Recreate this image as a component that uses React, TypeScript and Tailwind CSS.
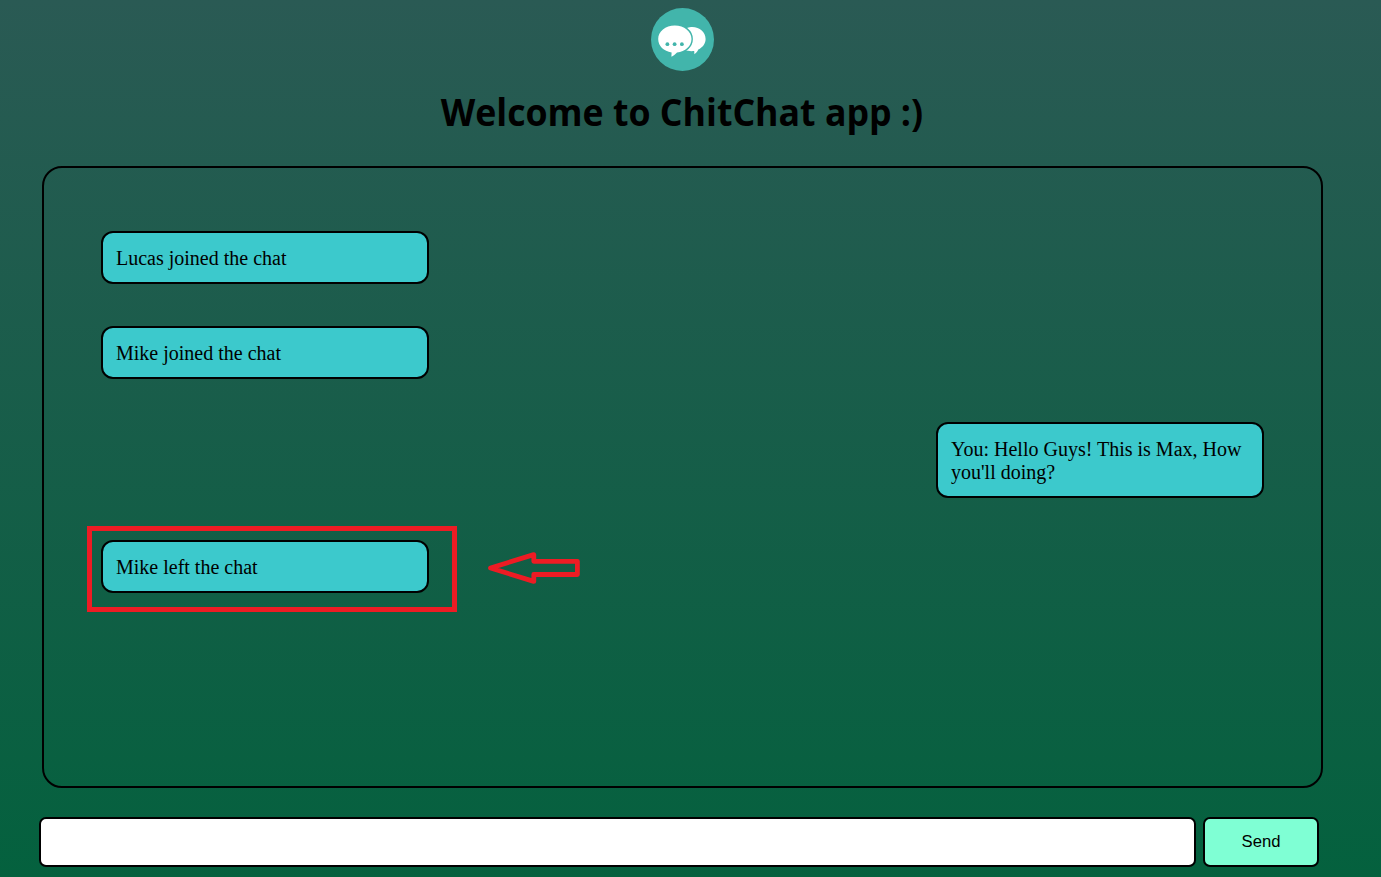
const messages = [
  { text: "Lucas joined the chat", side: "left", marked: false },
  { text: "Mike joined the chat", side: "left", marked: false },
  { text: "You: Hello Guys! This is Max, How you'll doing?", side: "right", marked: false },
  { text: "Mike left the chat", side: "left", marked: true },
];

function Logo() {
  return (
    <svg className="h-[63px] w-[63px]" viewBox="0 0 63 63" aria-hidden="true">
      <circle cx="31.5" cy="31.5" r="31.5" fill="#42b5ab" />
      <path
        d="M36 20C37.8 19.2 39.8 19 41.2 19C48.8 19 54.6 24.4 54.6 31C54.6 35.6 51.8 39.4 47.3 41.5C46.4 43.5 45 45.2 43.4 46.2L43.2 43C40 43.4 36.5 43 33.8 42Z"
        fill="#fff"
      />
      <path
        d="M23.8 17.4C33.2 17.4 40.5 23.4 40.5 31C40.5 38.2 34.2 43.6 26 44.6C24.4 46.4 22.3 47.9 20.4 48.7L20.6 44.5C12.8 43.2 7.2 38.2 7.2 31C7.2 23.4 14.4 17.4 23.8 17.4Z"
        fill="#fff"
        stroke="#42b5ab"
        strokeWidth="2.8"
        paintOrder="stroke"
      />
      <g fill="#42b5ab">
        <circle cx="16.4" cy="36.2" r="1.9" />
        <circle cx="23.6" cy="36.2" r="1.9" />
        <circle cx="30.9" cy="36.2" r="1.9" />
      </g>
    </svg>
  );
}

function Marker() {
  return (
    <>
      <div className="pointer-events-none absolute -top-[16px] -left-[16px] h-[86px] w-[370px] border-[5px] border-[#ed1c24]" />
      <svg
        className="pointer-events-none absolute top-[8px] left-[384px] h-[36px] w-[95px]"
        viewBox="0 0 95 36"
        fill="none"
        stroke="#ed1c24"
        strokeWidth="4.8"
        strokeLinejoin="round"
        aria-hidden="true"
      >
        <path d="M3.5 18L46.8 4.6V11.3H90.4V24.5H46.8V31.4Z" />
      </svg>
    </>
  );
}

export default function App() {
  return (
    <div className="flex h-[877px] w-full flex-col overflow-hidden bg-[linear-gradient(to_bottom,#2a5a54,#04613e)] pt-2 pr-4 text-black">
      <header className="flex flex-col items-center">
        <Logo />
        <h1 className="mt-[14px] mr-px mb-[2px] scale-x-[0.939] font-['Open_Sans',sans-serif] text-[38px] leading-[52px] font-bold whitespace-nowrap">
          Welcome to ChitChat app :)
        </h1>
      </header>
      <main className="mt-[27px] ml-[42px] flex h-[622px] w-[1281px] shrink-0 flex-col gap-[42.4px] rounded-[20px] border-2 border-black px-[57px] pt-[63px] font-['Liberation_Serif',serif] text-[20px] leading-[23px]">
        {messages.map((m) => (
          <div
            key={m.text}
            className={`relative w-[328px] rounded-[12px] border-2 border-black bg-[#3cc9cc] px-[13px] pt-[14px] pb-[12px] ${
              m.side === "right" ? "self-end" : "self-start"
            }`}
          >
            {m.text}
            {m.marked && <Marker />}
          </div>
        ))}
      </main>
      <form className="mt-[29px] ml-[39px] flex gap-[7px]" onSubmit={(e) => e.preventDefault()}>
        <input
          type="text"
          aria-label="Message"
          className="h-[50px] w-[1157px] rounded-[7px] border-2 border-black bg-white px-3 text-[20px] outline-none"
        />
        <button className="h-[50px] w-[116px] rounded-[7px] border-2 border-black bg-[#7fffd4] pb-[2px] font-['Liberation_Sans',sans-serif] text-[16.67px]">
          Send
        </button>
      </form>
    </div>
  );
}
